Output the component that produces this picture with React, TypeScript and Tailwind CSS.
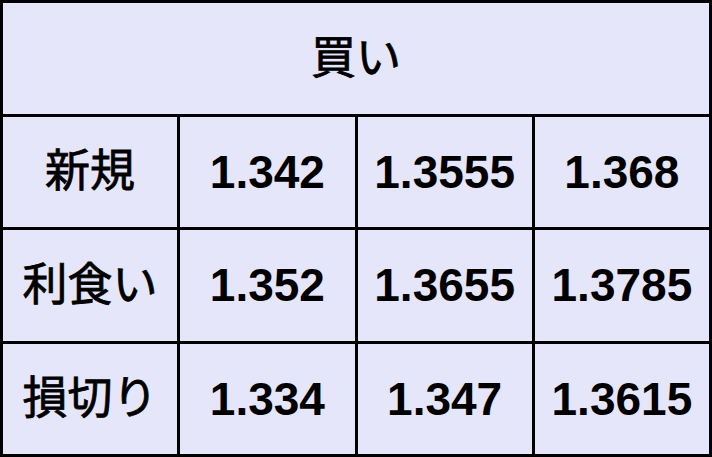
import React from 'react';

const rows = [
  { label: '新規', values: ['1.342', '1.3555', '1.368'] },
  { label: '利食い', values: ['1.352', '1.3655', '1.3785'] },
  { label: '損切り', values: ['1.334', '1.347', '1.3615'] },
];

const cell = 'bg-[#e6e6fa] flex items-center justify-center text-black leading-none';
// 日本語は中間の太さに見せる
const jp = `${cell} font-normal text-[45px] [-webkit-text-stroke:0.8px_black]`;
const num = `${cell} font-bold text-[46px]`;

export default function App() {
  return (
    <div
      className="w-[712px] h-[457px] bg-black p-[3px] grid grid-cols-4 grid-rows-4 gap-[3px]"
      style={{ fontFamily: '"Liberation Sans", "Noto Sans CJK JP", sans-serif' }}
    >
      {/* 見出し */}
      <div className={`${jp} col-span-4`}>買い</div>

      {rows.map((row) => (
        <React.Fragment key={row.label}>
          <div className={jp}>{row.label}</div>
          {row.values.map((v, i) => (
            <div key={i} className={num}>
              {v}
            </div>
          ))}
        </React.Fragment>
      ))}
    </div>
  );
}
